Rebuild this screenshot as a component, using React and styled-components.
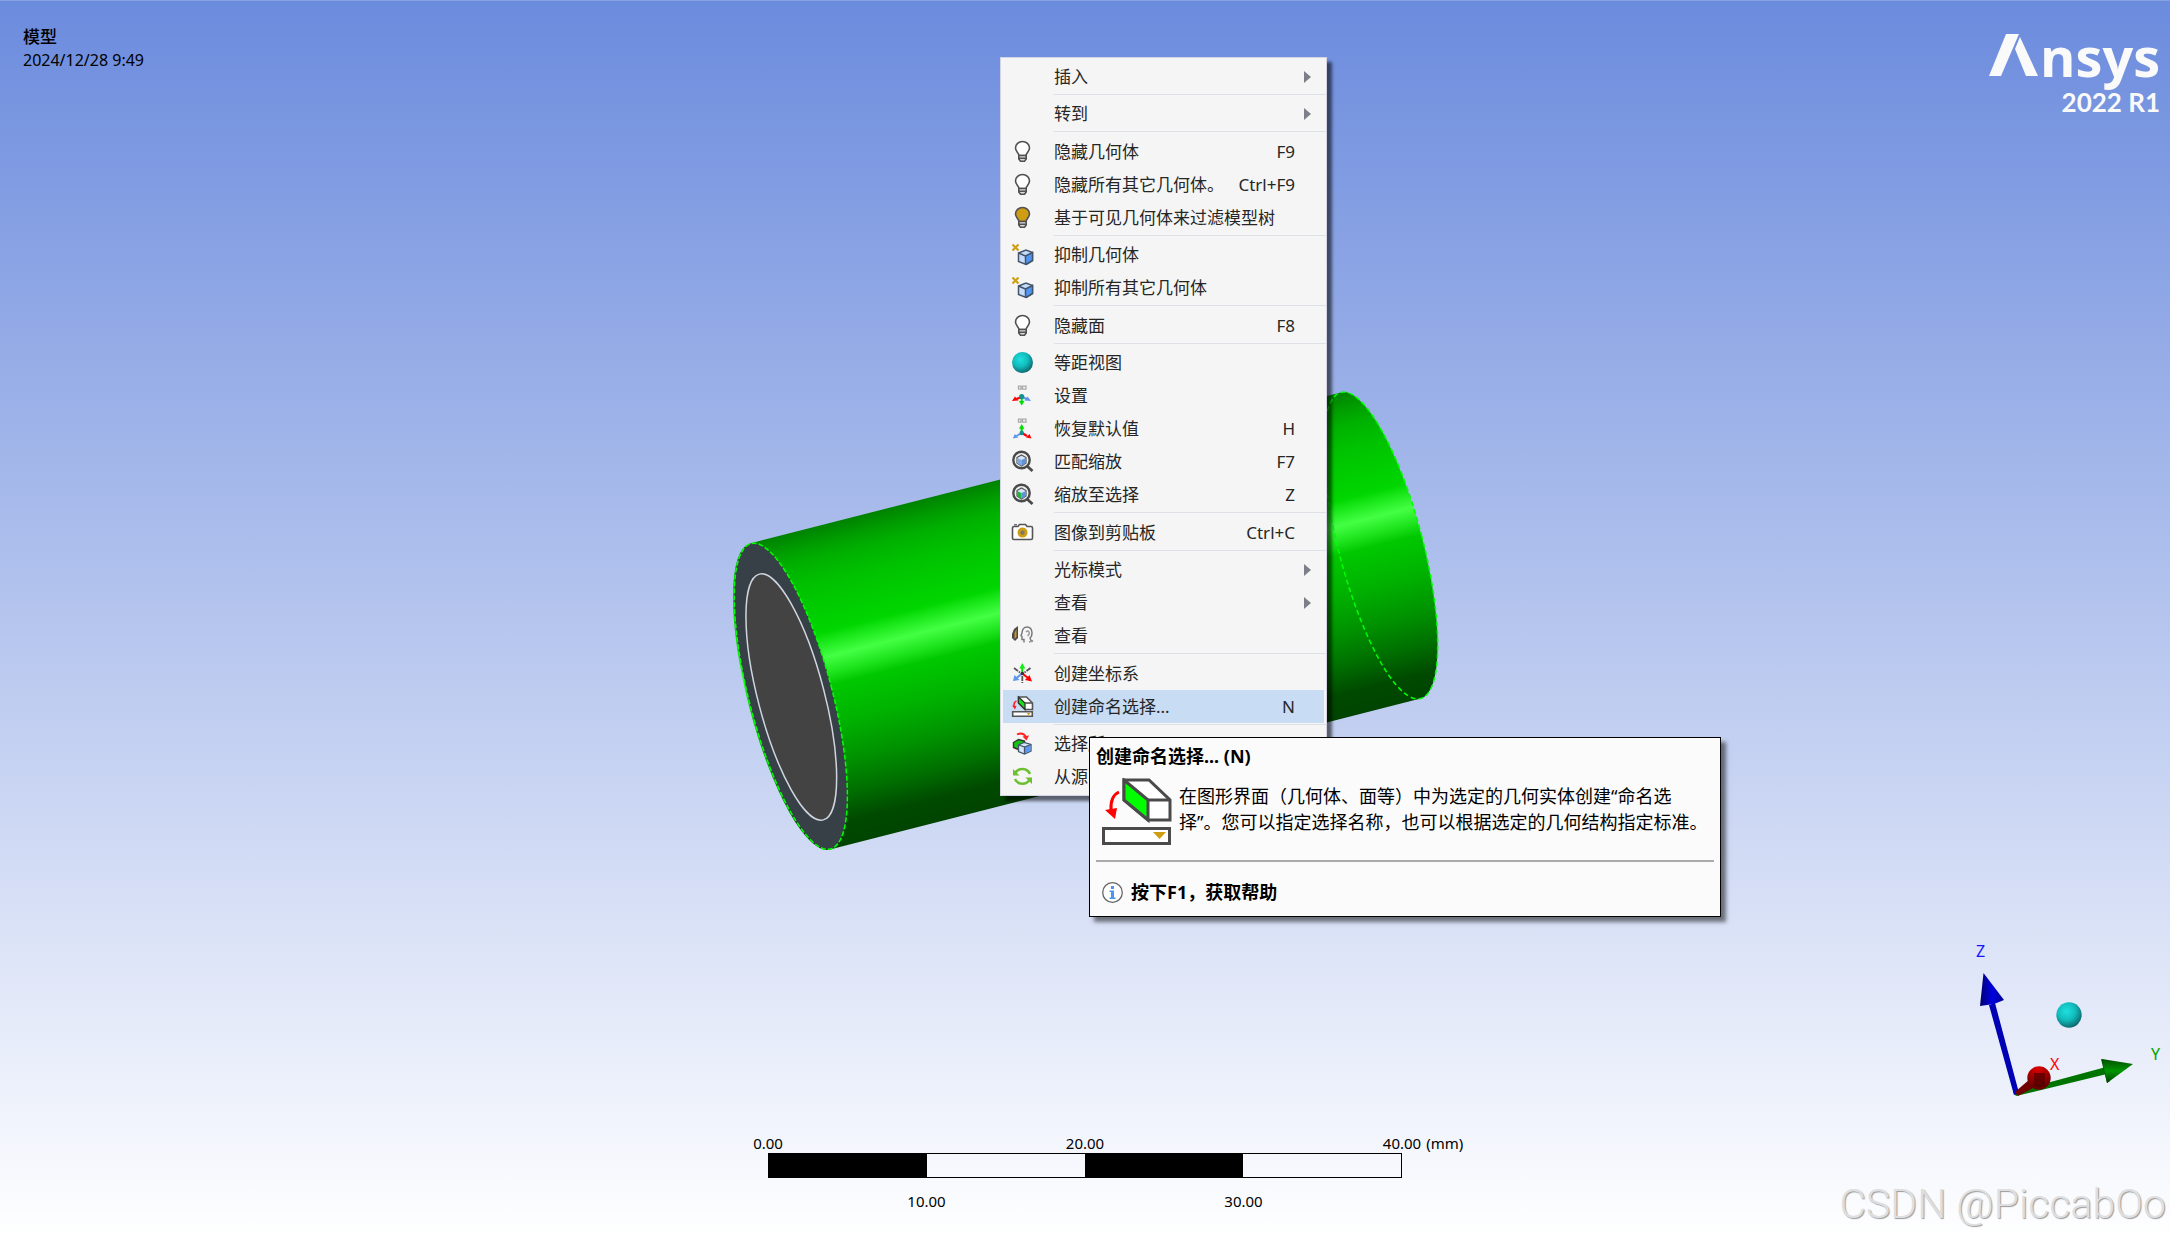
import React, {useState} from 'react'
import styled, {createGlobalStyle} from 'styled-components'

const GlobalStyle = createGlobalStyle`
    body {
        margin: 0;
        font-family: "Noto Sans", "Noto Sans CJK SC", sans-serif;
        color: #000;
    }
    * {
        box-sizing: border-box;
    }
`

const Viewport = styled.main`
    position: relative;
    display: flex;
    flex-direction: column;
    justify-content: space-between;
    min-height: 100vh;
    overflow: hidden;
    border-top: 1px solid #86a0e2;
    background: linear-gradient(#6b8bdd, #fff);
`

const Header = styled.header`
    display: flex;
    justify-content: space-between;
    align-items: flex-start;
    padding: 24px 10px 0 23px;
`

const Title = styled.h1`
    margin: 0;
    font-size: 17px;
    line-height: 23px;
    font-weight: 500;
`

const Stamp = styled.time`
    display: block;
    font-size: 16px;
    line-height: 24px;
`

const Brand = styled.div`
    display: flex;
    flex-direction: column;
    align-items: flex-end;
    color: #fafafa;
`

const Logo = styled.div`
    display: flex;
    align-items: flex-start;
    gap: 1px;
    height: 62px;
    padding-top: 9px;
`

const LogoText = styled.span`
    font-family: "Open Sans", sans-serif;
    font-size: 54px;
    line-height: 44px;
    font-weight: 700;
`

const Release = styled.span`
    font-family: Lato, sans-serif;
    font-size: 26px;
    line-height: 30px;
    font-weight: 700;
`

const Model = styled.svg`
    position: absolute;
    left: calc(50% - 360px);
    top: 384px;
    width: 720px;
    height: 475px;
`

const Menu = styled.div`
    position: absolute;
    left: calc(50% - 85px);
    top: 56px;
    min-width: 327px;
    padding: 2px;
    border: 1px solid #d3d5e4;
    background: #f5f5f5;
    box-shadow: 5px 5px 3px rgba(0, 0, 0, 0.55);
`

const MenuRow = styled.button`
    display: grid;
    grid-template-columns: 21px 1fr auto 7px;
    align-items: center;
    width: 100%;
    height: 33px;
    padding: 0 13px 0 9px;
    border: 0;
    background: ${({$active}) => ($active ? '#c8dcf4' : 'transparent')};
    color: #262626;
    font-family: inherit;
    font-size: 17px;
    line-height: 24px;
    text-align: left;
    white-space: nowrap;
`

const MenuLabel = styled.span`
    padding-left: 21px;
`

const Shortcut = styled.kbd`
    padding-right: 9px;
    font-family: inherit;
    font-size: 17px;
`

const Separator = styled.hr`
    margin: 1px -2px 2px 51px;
    border: 0;
    border-top: 1px solid #dde1e6;

    &:nth-of-type(even) {
        margin-bottom: 3px;
    }
`

const Icon = styled.svg`
    display: block;
    width: 21px;
    height: 21px;
    overflow: visible;
`

const Arrow = styled.svg`
    display: block;
    width: 7px;
    height: 12px;
`

const Tooltip = styled.section`
    position: absolute;
    left: calc(50% + 4px);
    top: 736px;
    width: 632px;
    padding: 5px 6px;
    border: 1px solid #000;
    background: #fbfbfb;
    box-shadow: 5px 5px 4px rgba(0, 0, 0, 0.5);
    font-size: 18px;
    line-height: 26px;
    white-space: nowrap;
`

const TooltipTitle = styled.h2`
    margin: 0;
    font-size: 18px;
    line-height: 26px;
    font-weight: 700;
`

const TooltipBody = styled.div`
    display: flex;
    gap: 7px;
    padding: 9px 0 14px 6px;
`

const TooltipText = styled.p`
    margin: 5px 0 0;
`

const TooltipIcon = styled.svg`
    flex: none;
    width: 70px;
    height: 68px;
`

const TooltipHelp = styled.footer`
    display: flex;
    align-items: center;
    gap: 8px;
    padding: 17px 0 6px 6px;
    border-top: 2px solid #aaa;
    font-weight: 700;
`

const Footer = styled.footer`
    display: grid;
    grid-template-columns: 1fr auto 1fr;
    align-items: end;
`

const Scale = styled.div`
    grid-column: 2;
    width: 634px;
    padding-bottom: 31px;
    font-size: 15px;
    line-height: 20px;
`

const Ticks = styled.div`
    display: flex;
    justify-content: space-between;
    padding: ${({$inset}) => ($inset ? '13px 25% 0' : '0')};
`

const Tick = styled.span`
    display: flex;
    justify-content: center;
    width: 0;
    white-space: nowrap;
`

const Unit = styled.span`
    width: 0;
    text-indent: 5px;
`

const ScaleBar = styled.div`
    display: flex;
    height: 25px;
    border: 1px solid #000;
`

const Segment = styled.div`
    flex: 1;
    background: ${({$filled}) => ($filled ? '#000' : 'transparent')};
`

const Corner = styled.div`
    display: flex;
    flex-direction: column;
    align-items: flex-end;
    gap: 74px;
    padding: 0 4px 11px 0;
`

const Triad = styled.svg`
    width: 196px;
    height: 165px;
    font-size: 16px;
`

const Watermark = styled.span`
    font-family: Roboto, sans-serif;
    font-size: 41px;
    line-height: 54px;
    font-weight: 300;
    color: #dfdfe1;
    text-shadow: 1px 1px 1px #999;
`

const Bulb = ({fill = '#fff'}) => (
    <Icon viewBox="0 0 21 21" fill="none" stroke="#505050" strokeWidth="1.6">
        <path d="M7 14.5c0-2.5-3.5-4-3.5-7.5a7 6.5 0 0 1 14 0c0 3.500-3.500 5-3.500 7.500z" fill={fill} />
        <path d="M6.800 14.500h7.400v3.500l-1.700 2.300h-4l-1.700-2.300zM7 17.200h7" fill="#ddd" />
    </Icon>
)

const Suppress = () => (
    <Icon viewBox="0 0 21 21">
        <path d="M.5.5l6 6M6.500.5l-6 6" stroke="#cfa014" strokeWidth="2.200" />
        <path d="M6.500 9l7.500-3 6.500 2.500v8L14 20.500l-7.500-3z" fill="#c5dcfa" stroke="#44546a" strokeWidth="1.500" />
        <path d="M13.500 12l7-3.500v8l-7 4z" fill="#4f96f5" />
        <path d="M6.500 9l7 3v8.500M13.500 12l7-3.500v8l-6.500 4" fill="none" stroke="#44546a" strokeWidth="1.500" />
    </Icon>
)

const Sphere = () => (
    <Icon viewBox="0 0 21 21">
        <circle cx="10.500" cy="10.500" r="10.500" fill="url(#teal)" />
    </Icon>
)

const IsoMark = () => (
    <path d="M6.500 1.200h2.500v3h-2.500zM10.500 1.200h3.500v3h-3.500z" fill="none" stroke="#aaa" strokeWidth="1.300" />
)

const IsoSet = () => (
    <Icon viewBox="0 0 21 21">
        <IsoMark />
        <path d="M9.500 12l-5 2" stroke="#f00" strokeWidth="2.400" />
        <path d="M0 16l3-4.500 3.500 4z" fill="#f00" />
        <path d="M10 12l5 2" stroke="#5b97f0" strokeWidth="2.400" />
        <path d="M19 16l-3.500-4.500-3 4z" fill="#5b97f0" />
        <path d="M9.700 12v4" stroke="#0d0" strokeWidth="2" />
        <path d="M9.700 20.500l-2.800-4.500h5.600z" fill="#0d0" />
        <circle cx="9.700" cy="11.500" r="2.600" fill="#148f92" />
    </Icon>
)

const IsoRestore = () => (
    <Icon viewBox="0 0 21 21">
        <IsoMark />
        <path d="M9.700 15V9" stroke="#0d0" strokeWidth="2.200" />
        <path d="M9.700 6l-2.700 4.800h5.400z" fill="#0d0" />
        <path d="M9.500 15l-5 3" stroke="#5b97f0" strokeWidth="2" />
        <path d="M.8 20.500l2-4.500 3.500 3.500z" fill="#5b97f0" />
        <path d="M10 15l5 3" stroke="#f00" strokeWidth="2.200" />
        <path d="M19.500 20.500l-2-4.500-3.500 3.500z" fill="#f00" />
        <circle cx="9.700" cy="15" r="2.200" fill="#148f92" />
    </Icon>
)

const Magnify = ({left}) => (
    <Icon viewBox="0 0 21 21">
        <path d="M15 15l5.500 5" stroke="#4a4a4a" strokeWidth="2.800" />
        <circle cx="9.500" cy="9" r="8.200" fill="#eef1f4" stroke="#4a4a4a" strokeWidth="2.400" />
        <path d="M5 6.500L9.500 4 14 6.500V12l-4.500 3L5 12z" fill="#d7e5f8" stroke="#555" strokeWidth="1.200" />
        <path d="M5 7l4.500 2v6L5 12z" fill={left} />
        <path d="M14 7L9.500 9v6l4.500-3z" fill="#5f92d8" />
    </Icon>
)

const Camera = () => (
    <Icon viewBox="0 0 21 21">
        <path d="M2 4.500h4l1.500-2h6l1.500 2h4q1.500 0 1.500 1.500v10q0 1.500-1.500 1.500H2q-1.500 0-1.500-1.500V6q0-1.500 1.500-1.500z" fill="#fff" stroke="#555" strokeWidth="1.600" />
        <path d="M2 2.800h3" stroke="#555" strokeWidth="1.200" />
        <circle cx="10.500" cy="10.600" r="3.600" fill="#777" stroke="#cf9d12" strokeWidth="2.800" />
    </Icon>
)

const LookAt = () => (
    <Icon viewBox="0 0 21 21">
        <path d="M0 9l2-5 4-3v12l-3 3-3-3z" fill="#4a4a4a" />
        <path d="M2.500 8l2-4v8l-2 2z" fill="#c89a1c" />
        <path d="M12 17.500v-3h-2v-3l-1-1 1-2.500Q10.500 2 15 2t5 5.500q0 4-2 5.500l1 2.500 2 1" fill="none" stroke="#777" strokeWidth="1.400" />
        <path d="M14 7q2-2 3 0t-1.500 4M17 17l4-1" fill="none" stroke="#999" strokeWidth="1.400" />
    </Icon>
)

const CoordSystem = () => (
    <Icon viewBox="0 0 21 21">
        <path d="M2 5l6 4.500M18.500 5l-6 4.500M10.300 13v7" stroke="#555" strokeWidth="1.800" strokeDasharray="5 1" />
        <path d="M10.300 10V5" stroke="#0d0" strokeWidth="2" />
        <path d="M10.300 0L7.300 5.500h6z" fill="#1e1" />
        <path d="M9.500 11l-5 4" stroke="#5b97f0" strokeWidth="2" />
        <path d="M1 18l1.500-6 5 5z" fill="#5b97f0" />
        <path d="M11 11l5 4" stroke="#f00" strokeWidth="2" />
        <path d="M20 18.500l-7-1.500 4.500-5z" fill="#f00" />
        <circle cx="10.300" cy="10.500" r="1.800" fill="#333" />
    </Icon>
)

const NamedSelection = () => (
    <Icon viewBox="0 0 21 21">
        <path d="M6.500 1h8l6 6v6.500h-7.500l-6.500-6.500z" fill="#fff" stroke="#555" strokeWidth="1.600" />
        <path d="M6.500 1l6.500 6v6.500l-6.500-6.500z" fill="#1be01b" stroke="#333" strokeWidth="1.300" />
        <path d="M13 7h7.500" stroke="#555" strokeWidth="1.600" />
        <path d="M4.500 5Q1.500 6 2 11" fill="none" stroke="#f22" strokeWidth="1.600" />
        <path d="M0 9.500l4.500.5-1.500 3.500z" fill="#f22" />
        <path d="M.7 15.700h19.600v4.600H.7z" fill="#fff" stroke="#555" strokeWidth="1.600" />
        <path d="M14.500 17h4l-2 2.300z" fill="#d1a01e" />
    </Icon>
)

const SelectMesh = () => (
    <Icon viewBox="0 0 21 21">
        <path d="M5 1.500q6-3 9 2.500" fill="none" stroke="#f22" strokeWidth="1.800" />
        <path d="M10.500 3.500l6.500-1-2.500 5z" fill="#f22" />
        <path d="M1.500 9.500l5-3 6 1.500v8l-5 1-6-2.500z" fill="#12c512" stroke="#333" strokeWidth="1.400" />
        <path d="M6.500 12l5.500-2.500 7 2V18l-6.500 3-6-2.500z" fill="#d5e6fb" stroke="#44546a" strokeWidth="1.300" />
        <path d="M12.500 14l6-2.500V18l-6 2.500z" fill="#5b97f0" />
        <path d="M6.500 12l6 2v7M12.500 14l6.500-2.500" fill="none" stroke="#44546a" strokeWidth="1.300" />
    </Icon>
)

const Refresh = () => (
    <Icon viewBox="0 0 21 21">
        <path d="M3 7.500A8.300 8.300 0 0 1 18 8M18 13A8.300 8.300 0 0 1 3 13" fill="none" stroke="#6cbf2e" strokeWidth="2.600" />
        <path d="M1 3v6.500h6.500zM20 18v-6.500h-6.500z" fill="#6cbf2e" />
    </Icon>
)

// null puts a separator between groups
const items = [
    {label: '插入', submenu: true},
    null,
    {label: '转到', submenu: true},
    null,
    {label: '隐藏几何体', keys: 'F9', icon: <Bulb />},
    {label: '隐藏所有其它几何体。', keys: 'Ctrl+F9', icon: <Bulb />},
    {label: '基于可见几何体来过滤模型树', icon: <Bulb fill="#cf9d12" />},
    null,
    {label: '抑制几何体', icon: <Suppress />},
    {label: '抑制所有其它几何体', icon: <Suppress />},
    null,
    {label: '隐藏面', keys: 'F8', icon: <Bulb />},
    null,
    {label: '等距视图', icon: <Sphere />},
    {label: '设置', icon: <IsoSet />},
    {label: '恢复默认值', keys: 'H', icon: <IsoRestore />},
    {label: '匹配缩放', keys: 'F7', icon: <Magnify left="#7ea8e0" />},
    {label: '缩放至选择', keys: 'Z', icon: <Magnify left="#1fb83c" />},
    null,
    {label: '图像到剪贴板', keys: 'Ctrl+C', icon: <Camera />},
    null,
    {label: '光标模式', submenu: true},
    {label: '查看', submenu: true},
    {label: '查看', icon: <LookAt />},
    null,
    {label: '创建坐标系', icon: <CoordSystem />},
    {label: '创建命名选择...', keys: 'N', icon: <NamedSelection />},
    null,
    {label: '选择所', icon: <SelectMesh />},
    {label: '从源更', icon: <Refresh />},
]

const ContextMenu = () => {

    const [active, setActive] = useState('创建命名选择...')

    return (
        <Menu role="menu">
            {items.map((item, i) => item ? (
                <MenuRow
                    key={i}
                    type="button"
                    role="menuitem"
                    $active={item.label === active}
                    onClick={() => setActive(item.label)}
                >
                    <span>{item.icon}</span>
                    <MenuLabel>{item.label}</MenuLabel>
                    {item.keys ? <Shortcut>{item.keys}</Shortcut> : <span />}
                    {item.submenu && (
                        <Arrow viewBox="0 0 7 12"><path d="M0 0l7 6-7 6z" fill="#7b8088" /></Arrow>
                    )}
                </MenuRow>
            ) : <Separator key={i} />)}
        </Menu>
    )
}

const Cylinder = () => (
    <Model viewBox="725 385 720 475" aria-hidden="true">
        <defs>
            <linearGradient id="body" gradientUnits="userSpaceOnUse" x1="750" y1="543.400" x2="828" y2="848.500">
                <stop offset="0" stopColor="#008200" />
                <stop offset=".05" stopColor="#009c00" />
                <stop offset=".1" stopColor="#00b000" />
                <stop offset=".18" stopColor="#00c200" />
                <stop offset=".33" stopColor="#00d600" />
                <stop offset=".37" stopColor="#22ec22" />
                <stop offset=".41" stopColor="#44ff44" />
                <stop offset=".46" stopColor="#1ee41e" />
                <stop offset=".5" stopColor="#00c800" />
                <stop offset=".62" stopColor="#00b200" />
                <stop offset=".74" stopColor="#009200" />
                <stop offset=".84" stopColor="#007000" />
                <stop offset=".93" stopColor="#004a00" />
                <stop offset="1" stopColor="#004400" />
            </linearGradient>
        </defs>
        <path d="M750 543.400L1340.700 392.400A42.100 158.200 -14.600 0 1 1420.600 698.600L829.900 849.600A42.100 158.200 -14.600 0 1 750 543.400z" fill="url(#body)" />
        <ellipse cx="1380.700" cy="545.500" rx="42.100" ry="158.200" transform="rotate(-14.600 1380.700 545.500)" fill="none" stroke="#0f0" strokeWidth="1.500" strokeDasharray="5 3" />
        <ellipse cx="790.800" cy="696.300" rx="41.600" ry="157.800" transform="rotate(-14.600 790.800 696.300)" fill="#373f47" stroke="#0f0" strokeWidth="1.500" strokeDasharray="5 2" />
        <ellipse cx="791.300" cy="697" rx="33.200" ry="127" transform="rotate(-14.600 791.300 697)" fill="#434343" stroke="#cfd6de" strokeWidth="1.500" />
    </Model>
)

const Axes = () => (
    <Triad viewBox="1970 940 196 165">
        <defs>
            <radialGradient id="teal" cx=".4" cy=".35" r=".7">
                <stop offset="0" stopColor="#1fe0e0" />
                <stop offset=".5" stopColor="#12bcbc" />
                <stop offset="1" stopColor="#0b6066" />
            </radialGradient>
            <radialGradient id="red" cx=".45" cy=".1" r=".8">
                <stop offset="0" stopColor="#e00000" />
                <stop offset="1" stopColor="#6a0000" />
            </radialGradient>
            <linearGradient id="blue">
                <stop offset="0" stopColor="#000070" />
                <stop offset=".5" stopColor="#0000e0" />
                <stop offset="1" stopColor="#000090" />
            </linearGradient>
            <linearGradient id="green" x2="0" y2="1">
                <stop offset="0" stopColor="#005000" />
                <stop offset=".5" stopColor="#009600" />
                <stop offset="1" stopColor="#004000" />
            </linearGradient>
        </defs>
        <path d="M2016 1098l91-22-1-7-93 25z" fill="#007400" />
        <path d="M2101 1061l4 1 5 21-3 2z" fill="#004800" />
        <path d="M2133 1066l-31-5 1 6 4 18z" fill="url(#green)" />
        <path d="M1989 1007l6-2 24 90-5 2z" fill="#0000b4" />
        <path d="M1983.500 975l20.500 27-10 4-14 2z" fill="url(#blue)" />
        <path d="M2015 1094l15-13 7 7-19 10z" fill="#700000" />
        <circle cx="2039" cy="1080" r="11.700" fill="url(#red)" />
        <rect x="2034" y="1075" width="11" height="14" fill="#4e0000" opacity=".7" />
        <circle cx="2069" cy="1017" r="12.700" fill="url(#teal)" />
        <text x="1976" y="959" fill="#1414ff">Z</text>
        <text x="2050" y="1072" fill="#f00">X</text>
        <text x="2151" y="1062" fill="#00a400">Y</text>
    </Triad>
)

const App = () => (
    <>
        <GlobalStyle />
        <Viewport>
            <Header>
                <div>
                    <Title>模型</Title>
                    <Stamp>2024/12/28 9:49</Stamp>
                </div>
                <Brand>
                    <Logo>
                        <svg width="50" height="42" viewBox="0 0 50 42" aria-hidden="true">
                            <path d="M0 42L17 0h13L12 42z" fill="#fafafa" />
                            <path d="M31 3l18 39H37L26 15z" fill="#fafafa" />
                        </svg>
                        <LogoText>nsys</LogoText>
                    </Logo>
                    <Release>2022 R1</Release>
                </Brand>
            </Header>

            <Cylinder />

            <Footer>
                <Scale>
                    <Ticks>
                        <Tick>0.00</Tick>
                        <Tick>20.00</Tick>
                        <Tick>40.00<Unit>(mm)</Unit></Tick>
                    </Ticks>
                    <ScaleBar>
                        <Segment $filled />
                        <Segment />
                        <Segment $filled />
                        <Segment />
                    </ScaleBar>
                    <Ticks $inset>
                        <Tick>10.00</Tick>
                        <Tick>30.00</Tick>
                    </Ticks>
                </Scale>
                <Corner>
                    <Axes />
                    <Watermark>CSDN @PiccabOo</Watermark>
                </Corner>
            </Footer>

            <ContextMenu />

            <Tooltip role="tooltip">
                <TooltipTitle>创建命名选择... (N)</TooltipTitle>
                <TooltipBody>
                    <TooltipIcon viewBox="0 0 70 68" aria-hidden="true">
                        <path d="M22 2h25l21 20v20H46L22 22z" fill="#fff" stroke="#4a4a4a" strokeWidth="3" strokeLinejoin="miter" />
                        <path d="M22 2l24 20v20L22 22z" fill="#0f0" stroke="#4a4a4a" strokeWidth="3" />
                        <path d="M46 22h22" stroke="#4a4a4a" strokeWidth="3" />
                        <path d="M17 14Q8 18 9 33" fill="none" stroke="#f00" strokeWidth="3" />
                        <path d="M3 32l12-2-2 11z" fill="#f00" />
                        <path d="M1.500 50.500h66v15h-66z" fill="#fff" stroke="#4a4a4a" strokeWidth="3" />
                        <path d="M51 54h13l-6.500 7z" fill="#cf9d12" />
                    </TooltipIcon>
                    <TooltipText>
                        在图形界面（几何体、面等）中为选定的几何实体创建“命名选
                        <br />
                        择”。您可以指定选择名称，也可以根据选定的几何结构指定标准。
                    </TooltipText>
                </TooltipBody>
                <TooltipHelp>
                    <Icon viewBox="0 0 21 21" aria-hidden="true">
                        <circle cx="10.500" cy="10.500" r="9.800" fill="#fff" stroke="#666" strokeWidth="1.300" />
                        <path d="M9 4h3v3H9zM7.500 8.500H12v7h1.500v1.500h-6v-1.500H9V10H7.500z" fill="#4a97f0" />
                    </Icon>
                    <span>按下F1，获取帮助</span>
                </TooltipHelp>
            </Tooltip>
        </Viewport>
    </>
)

export default App
